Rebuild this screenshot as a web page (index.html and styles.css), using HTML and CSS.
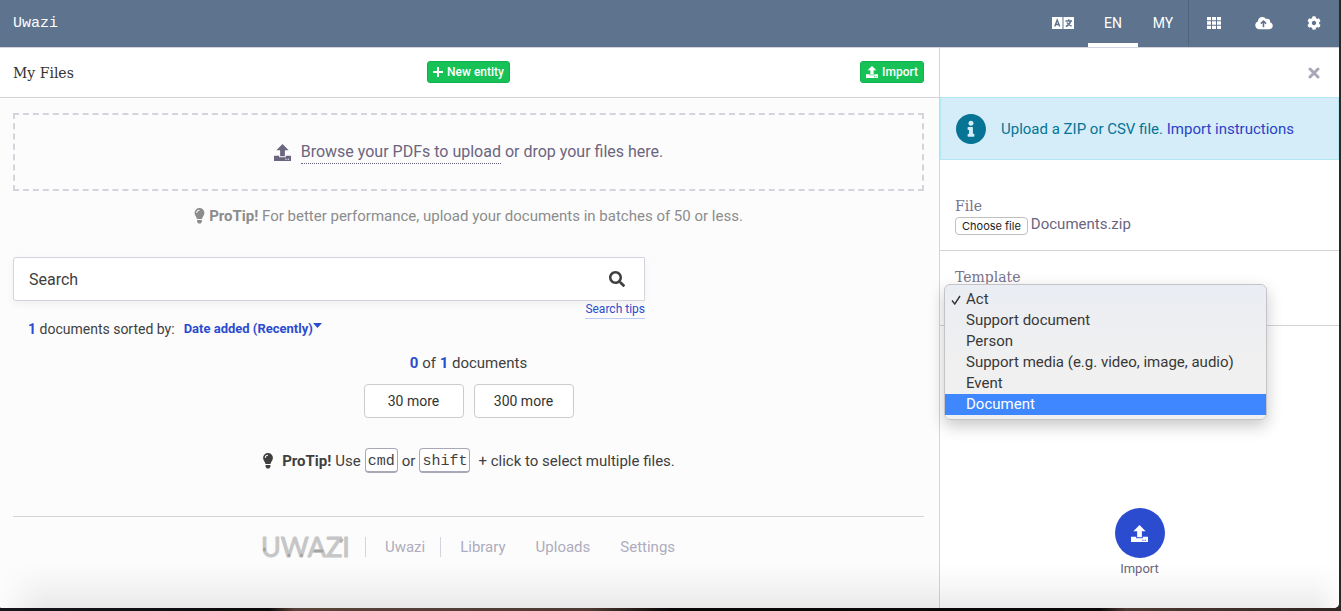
FILE: index.html
```html
<!DOCTYPE html>
<html lang="en">
<head>
<meta charset="utf-8">
<title>My Files - Uwazi</title>
<link rel="stylesheet" href="styles.css">
</head>
<body>
<svg class="sprite" aria-hidden="true">
  <symbol id="upload" viewBox="0 0 18 18"><path d="M9 0l6.500 6.500h-4v6.500h-5V6.500h-4z"/><path d="M0 12.500h5.500v1.500h7v-1.500H18V18H0zM12 15.500v1.200h1.300v-1.200zM14.500 15.500v1.200h1.300v-1.200z" fill-rule="evenodd"/></symbol>
  <symbol id="bulb" viewBox="0 0 12 18"><path d="M6 0a5.500 5.500 0 0 0-5.500 5.700C.500 8.500 2.700 9.700 3.200 12.500h5.600c.500-2.800 2.700-4 2.700-6.800A5.500 5.500 0 0 0 6 0zM6 2v1a2.600 2.600 0 0 0-2.600 2.700h-1A3.600 3.600 0 0 1 6 2z" fill-rule="evenodd"/><path d="M3.300 13.500h5.400v2L7.500 17.500h-3l-1.200-2z"/></symbol>
</svg>
<div class="app">
  <header class="topbar">
    <a class="brand" href="#">Uwazi</a>
    <nav class="topnav">
      <button class="nav-item" aria-label="Live translate">
        <svg width="22" height="12" viewBox="0 0 22 12"><path d="M0 0h10.500v12H0zM11.500 0H22v12H11.500z" fill="#fff"/><g fill="none" stroke="#5d738e" stroke-width="1.400"><path d="M2.800 9.500L5.200 3l2.500 6.500M3.500 7.500h3.400"/><path d="M13.500 4h6.500M16.700 2.300V4M18.600 4.500c-.6 2.300-2.300 4-4.800 5M15 5.500c.8 1.800 2.500 3 4.700 3.700"/></g></svg>
      </button>
      <a class="nav-item active" href="#">EN</a>
      <a class="nav-item" href="#">MY</a>
      <a class="nav-item divided" href="#" aria-label="Library"><svg width="14" height="12" viewBox="0 0 14 12"><path d="M0 0h4v3.300H0zM5 0h4v3.300H5zM10 0h4v3.300h-4zM0 4.300h4v3.400H0zM5 4.300h4v3.400H5zM10 4.300h4v3.400h-4zM0 8.700h4V12H0zM5 8.700h4V12H5zM10 8.700h4V12h-4z"/></svg></a>
      <a class="nav-item" href="#" aria-label="Uploads"><svg width="18" height="14" viewBox="0 0 640 512"><path d="M537.600 226.600c4.100-10.700 6.400-22.400 6.400-34.600 0-53-43-96-96-96-19.700 0-38.100 6-53.300 16.200C367 64.200 315.300 32 256 32c-88.400 0-160 71.600-160 160 0 2.700.1 5.400.2 8.100C40.200 219.800 0 273.200 0 336c0 79.500 64.500 144 144 144h368c70.700 0 128-57.300 128-128 0-61.900-44-113.600-102.400-125.400z"/><path d="M300 410V190M205 280l95-95 95 95" fill="none" stroke="#5d738e" stroke-width="58"/></svg></a>
      <a class="nav-item" href="#" aria-label="Settings"><svg width="14" height="14" viewBox="0 0 512 512"><path d="M487.400 315.700l-42.600-24.600c4.300-23.200 4.300-47 0-70.200l42.600-24.600c4.900-2.800 7.100-8.600 5.500-14-11.100-35.600-30-67.800-54.700-94.600-3.800-4.100-10-5.100-14.800-2.300L380.800 110c-17.900-15.400-38.500-27.300-60.800-35.100V25.800c0-5.600-3.900-10.500-9.400-11.700-36.700-8.200-74.300-7.800-109.200 0-5.500 1.200-9.400 6.100-9.400 11.700V75c-22.200 7.900-42.800 19.800-60.800 35.100L88.700 85.500c-4.900-2.800-11-1.900-14.800 2.300-24.700 26.700-43.600 58.900-54.700 94.600-1.700 5.400.6 11.200 5.500 14L67.300 221c-4.300 23.200-4.300 47 0 70.200l-42.600 24.600c-4.900 2.800-7.100 8.600-5.500 14 11.100 35.600 30 67.800 54.700 94.600 3.800 4.100 10 5.100 14.800 2.300l42.600-24.600c17.900 15.400 38.500 27.300 60.800 35.100v49.200c0 5.600 3.900 10.500 9.400 11.700 36.700 8.200 74.300 7.800 109.200 0 5.500-1.200 9.400-6.100 9.400-11.700v-49.200c22.200-7.900 42.800-19.800 60.800-35.100l42.600 24.600c4.900 2.800 11 1.900 14.800-2.300 24.700-26.700 43.600-58.900 54.700-94.600 1.500-5.500-.7-11.300-5.600-14.100zM256 336c-44.100 0-80-35.900-80-80s35.900-80 80-80 80 35.900 80 80-35.900 80-80 80z"/></svg></a>
    </nav>
  </header>

  <div class="columns">
    <main class="files">
      <div class="titlebar">
        <h1 class="title">My Files</h1>
        <button class="btn-success"><svg width="10" height="10" viewBox="0 0 10 10"><path d="M4 0h2v4h4v2H6v4H4V6H0V4h4z"/></svg>New entity</button>
        <button class="btn-success end"><svg width="12" height="12"><use href="#upload"/></svg>Import</button>
      </div>
      <div class="content">
        <div class="dropzone">
          <svg width="17" height="17"><use href="#upload"/></svg>
          <span><a class="browse" href="#">Browse your PDFs to upload</a> or drop your files here.</span>
        </div>
        <p class="tip muted"><svg width="11" height="16"><use href="#bulb"/></svg><span><b>ProTip!</b> For better performance, upload your documents in batches of 50 or less.</span></p>

        <form class="search">
          <div class="searchbox">
            <input class="search-input" type="text" placeholder="Search" aria-label="Search">
            <button class="search-btn" type="button" aria-label="Submit search"><svg width="16" height="16" viewBox="0 0 512 512"><path d="M505 442.700L405.300 343c-4.500-4.500-10.600-7-17-7H372c27.600-35.300 44-79.700 44-128C416 93.100 322.900 0 208 0S0 93.100 0 208s93.100 208 208 208c48.300 0 92.700-16.400 128-44v16.300c0 6.400 2.500 12.500 7 17l99.700 99.700c9.400 9.400 24.600 9.400 33.900 0l28.300-28.300c9.400-9.400 9.400-24.600.1-34zM208 336c-70.700 0-128-57.200-128-128 0-70.700 57.200-128 128-128 70.700 0 128 57.200 128 128 0 70.700-57.200 128-128 128z"/></svg></button>
          </div>
          <a class="search-tips" href="#">Search tips</a>
        </form>

        <div class="sorting">
          <span><b class="num">1</b> documents sorted by:</span>
          <button class="sort-btn">Date added (Recently)<svg width="9" height="5" viewBox="0 0 9 5"><path d="M0 0h9L4.500 5z"/></svg></button>
        </div>

        <p class="count"><b class="num">0</b> of <b class="num">1</b> documents</p>
        <div class="more">
          <button class="btn-more">30 more</button>
          <button class="btn-more">300 more</button>
        </div>
        <p class="tip keys"><svg width="12" height="16"><use href="#bulb"/></svg><b>ProTip!</b> Use <kbd>cmd</kbd> or <kbd>shift</kbd> <span class="after">+ click to select multiple files.</span></p>

        <footer class="footer">
          <svg class="logo" width="92" height="36" viewBox="0 0 92 36" role="img" aria-label="Uwazi">
            <text x="0" y="28">UWAZI</text>
            <g stroke="#8f8f8f" stroke-width="3" stroke-linecap="round" opacity=".6"><path d="M3.500 20v1M28 26v.5M40.500 26v.5M54 22h7M81 11l-1 1.500"/></g>
          </svg>
          <a class="foot-link first" href="#">Uwazi</a>
          <a class="foot-link" href="#">Library</a>
          <a class="foot-link" href="#">Uploads</a>
          <a class="foot-link" href="#">Settings</a>
        </footer>
      </div>
    </main>

    <aside class="panel">
      <div class="panel-head">
        <button class="close" aria-label="Close"><svg width="12" height="12" viewBox="0 0 12 12"><path d="M2 2l8 8M10 2l-8 8" stroke="#a9a8b8" stroke-width="3" stroke-linecap="round"/></svg></button>
      </div>
      <div class="alert">
        <svg width="30" height="30" viewBox="8 8 496 496"><path d="M256 8C119.043 8 8 119.083 8 256c0 136.997 111.043 248 248 248s248-111.003 248-248C504 119.083 392.957 8 256 8zm0 110c23.196 0 42 18.804 42 42s-18.804 42-42 42-42-18.804-42-42 18.804-42 42-42zm56 254c0 6.627-5.373 12-12 12h-88c-6.627 0-12-5.373-12-12v-24c0-6.627 5.373-12 12-12h12v-64h-12c-6.627 0-12-5.373-12-12v-24c0-6.627 5.373-12 12-12h64c6.627 0 12 5.373 12 12v100h12c6.627 0 12 5.373 12 12v24z"/></svg>
        <span>Upload a ZIP or CSV file. <a href="#">Import instructions</a></span>
      </div>
      <div class="field file-field">
        <span class="field-label">File</span>
        <div class="file-row">
          <input class="file-input" type="file" id="file">
          <label class="file-btn" for="file">Choose file</label>
          <span class="file-name">Documents.zip</span>
        </div>
      </div>
      <div class="field template-field">
        <label class="field-label" for="template">Template</label>
        <div class="select-wrap">
          <select class="template" id="template"><option>Act</option><option>Support document</option><option>Person</option><option>Support media (e.g. video, image, audio)</option><option>Event</option><option>Document</option></select>
          <ul class="menu" role="listbox" aria-label="Template">
            <li role="option" aria-selected="true"><svg width="10" height="10" viewBox="0 0 10 10"><path d="M1 5.500L3.800 9 9 1" fill="none" stroke="#333" stroke-width="1.400"/></svg>Act</li>
            <li role="option">Support document</li>
            <li role="option">Person</li>
            <li role="option">Support media (e.g. video, image, audio)</li>
            <li role="option">Event</li>
            <li role="option" class="hover">Document</li>
          </ul>
        </div>
      </div>
      <button class="import"><span class="disc"><svg width="17" height="17"><use href="#upload"/></svg></span>Import</button>
    </aside>
  </div>
</div>
</body>
</html>
```

FILE: styles.css
```css
* { box-sizing: border-box; }
body {
  margin: 0;
  height: 100vh;
  padding: 0 2px 3px 0;
  background: linear-gradient(90deg, #17161d, #0b0909 20%, #5a4238 22%, #4d3931 44%, #080606 50%, #0b0808 82%, #4d3931 84%, #302522);
  font: 14px/20px Roboto, sans-serif;
  color: #404040;
}
button { font: inherit; color: inherit; border: 0; background: none; padding: 0; cursor: pointer; }
a { color: inherit; text-decoration: none; }
svg { fill: currentColor; flex: none; }
h1, p, ul { margin: 0; padding: 0; }
.sprite { display: none; }

.app {
  position: relative;
  display: flex;
  flex-direction: column;
  height: 100%;
  overflow: hidden;
  background: #fcfcfc;
  border-radius: 0 0 5px 1px;
}
.app::after {
  content: "";
  position: absolute;
  inset: auto 0 0 0;
  height: 44px;
  background: linear-gradient(rgba(0, 0, 0, 0), rgba(0, 0, 0, .03) 50%, rgba(0, 0, 0, .075));
  mask-image: linear-gradient(90deg, transparent, #000 44px, #000 calc(100% - 24px), rgba(0, 0, 0, .3));
  pointer-events: none;
}

.topbar {
  display: flex;
  justify-content: space-between;
  height: 48px;
  flex: none;
  padding-left: 13px;
  background: #5d738e;
  border-bottom: 1px solid #d4d4dc;
  color: #fff;
}
.brand { font: 15px/48px "Liberation Mono", monospace; }
.topnav { display: flex; }
.nav-item { display: flex; width: 50px; align-items: center; justify-content: center; border-bottom: 4px solid transparent; border-top: 3px solid transparent; }
.nav-item.active { border-bottom-color: #fff; }
.nav-item.divided { width: 51px; background: linear-gradient(#50647c, #50647c) 0 0 / 1px 100% no-repeat border-box; }

.columns { display: flex; flex: 1; min-height: 0; }
.files { flex: 1; min-width: 0; }
.titlebar {
  display: grid;
  grid-template-columns: 1fr auto 1fr;
  align-items: center;
  height: 50px;
  padding: 0 15px 0 13px;
  background: #fff;
  border-bottom: 1px solid #d4d4d8;
}
.title { font: 14px/20px "DejaVu Serif", serif; color: #333; }
.btn-success {
  display: flex;
  align-items: center;
  gap: 4px;
  height: 22px;
  margin-bottom: 2px;
  padding: 0 5px;
  border: 1px solid #0fb34d;
  border-radius: 3px;
  background: #16c255;
  color: #fff;
  font-size: 12px;
  font-weight: 500;
}
.btn-success.end { justify-self: end; }
.content { padding: 15px 15px 0 13px; }
.dropzone {
  display: flex;
  align-items: center;
  justify-content: center;
  gap: 10px;
  height: 78px;
  border: 2px dashed #d4d4dc;
  color: #6b6580;
  font-size: 16px;
}
.browse { border-bottom: 1px dotted; padding-bottom: 2px; }
.tip { display: flex; justify-content: center; align-items: center; gap: 4px; font-size: 15px; }
.tip.muted { margin-top: 15px; color: #8c8c8c; }

.search { width: 632px; max-width: 100%; margin-top: 31px; display: flex; flex-direction: column; align-items: flex-end; }
.searchbox {
  display: flex;
  width: 100%;
  height: 44px;
  background: #fff;
  border: 1px solid #d4d4dc;
  border-radius: 3px 0 0 3px;
  box-shadow: 0 3px 8px rgba(0, 0, 0, .05);
}
.search-input { flex: 1; min-width: 0; border: 0; outline: 0; background: none; padding: 0 15px; font: 16px Roboto, sans-serif; color: #404040; }
.search-input::placeholder { color: #404040; opacity: 1; }
.search-btn { display: grid; place-items: center; width: 55px; }
.search-tips { font-size: 12px; line-height: 17px; color: #2b4ccf; border-bottom: 1px solid #b9cdf5; }
.num { color: #2b4ccf; }
.sorting { display: flex; gap: 9px; padding-left: 15px; }
.sort-btn { display: flex; color: #2b4ccf; font-size: 13px; font-weight: 700; }
.sort-btn svg { margin-top: 4px; }
.count { margin-top: 14px; text-align: center; font-size: 15px; }
.more { display: flex; justify-content: center; gap: 10px; margin-top: 11px; }
.btn-more { width: 100px; height: 34px; border: 1px solid #ccc; border-radius: 4px; background: #fff; color: #333; }
.keys { margin-top: 30px; }
.keys svg { margin-right: 4px; }
.keys .after { margin-left: 4px; }
kbd {
  padding: 4px 2px 0;
  border: 1px solid #a9a8b8;
  border-bottom-width: 2px;
  border-radius: 4px;
  background: #fff;
  font: 15px/18px "Liberation Mono", monospace;
}
.footer {
  display: flex;
  align-items: center;
  justify-content: center;
  margin-top: 43px;
  padding: 12px 0 0 14px;
  border-top: 1px solid #d4d4d8;
  color: #aeacbd;
  font-size: 15px;
}
.logo text { font: 27px Lato, sans-serif; fill: #c6c6c6; stroke: #c6c6c6; stroke-width: 1px; stroke-linejoin: round; }
.logo { margin-right: 12px; }
.foot-link { padding: 0 15px; }
.foot-link.first { border: solid #d4d4dc; border-width: 0 1px; padding-left: 19px; margin-right: 4px; }

.panel { display: flex; flex-direction: column; width: 400px; flex: none; background: #fff; border-left: 1px solid #d4d4dc; }
.panel-head { display: flex; justify-content: flex-end; align-items: center; height: 49px; padding-right: 19px; }
.close { display: flex; }
.alert {
  display: flex;
  align-items: center;
  gap: 15px;
  height: 63px;
  padding-left: 15px;
  border: 1px solid #b3e8f2;
  background: #d4edf8;
  color: #067495;
}
.alert span, .file-name { font-size: 15px; }
.alert a { color: #2b3fc8; }
.field { padding: 0 15px; border-bottom: 1px solid #d4d4d8; }
.field-label { display: block; font: 14px/20px "DejaVu Serif", serif; color: #7a738c; }
.file-field { padding-top: 36px; padding-bottom: 15px; }
.file-row { display: flex; gap: 3px; color: #6b6580; }
.file-input { position: absolute; width: 1px; height: 1px; opacity: 0; }
.file-btn {
  margin-top: 1px;
  height: 18px;
  padding: 0 6px;
  border: 1px solid #c0c0c0;
  border-radius: 4px;
  background: #fff;
  color: #222;
  font: 11px/16px Inter, sans-serif;
}
.file-name { line-height: 16px; }
.template-field { padding-top: 16px; padding-bottom: 8px; }
.select-wrap { position: relative; margin-top: -3px; }
.template { display: block; width: 292px; height: 33px; border: 1px solid #c3cbe6; background: #fff; font: inherit; }
.menu {
  position: absolute;
  top: 0;
  left: -11px;
  width: 323px;
  padding: 4px 0;
  border: 1px solid #c4c4c8;
  border-radius: 6px;
  background: linear-gradient(#eaedf3, #f0f0f0 60%);
  box-shadow: 0 6px 16px rgba(0, 0, 0, .22);
  list-style: none;
  font-size: 15px;
  line-height: 21px;
  color: #383838;
}
.menu li { display: flex; align-items: center; padding-left: 21px; }
.menu li[aria-selected] { padding-left: 6px; gap: 5px; }
.menu .hover { background: #3f87ff; color: #fff; }
.import { display: flex; flex-direction: column; align-items: center; align-self: center; gap: 1px; margin: auto 0 29px; font-size: 13px; color: #6b6580; }
.disc { display: grid; place-items: center; width: 50px; height: 50px; border-radius: 50%; background: #2b4ccf; color: #fff; }
```
